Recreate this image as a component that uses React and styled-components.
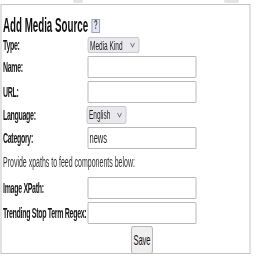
import React from "react";
import styled, { createGlobalStyle } from "styled-components";

const GlobalStyle = createGlobalStyle`
  html, body {
    margin: 0;
    padding: 0;
    background: #ffffff;
    overflow: hidden;
  }
  body {
    font-family: "Liberation Sans", Arial, sans-serif;
    color: #1a1a1a;
  }
`;

// the page is drawn at double width and squeezed, as in the screenshot
const Stage = styled.div`
  width: 512px;
  height: 256px;
  transform: scaleX(0.5);
  transform-origin: 0 0;
`;

const TopStrip = styled.div`
  height: 4px;
  display: flex;
  align-items: flex-start;
  padding-left: 146px;
  gap: 282px;
`;

const TabStub = styled.div`
  width: ${(p) => p.$w}px;
  height: 3px;
  background: #e4e4e4;
  border-radius: 0 0 4px 4px;
`;

const Panel = styled.div`
  box-sizing: border-box;
  margin-left: 1px;
  width: 500px;
  height: 250px;
  border: solid #c4c4c4;
  border-width: 1px 2px;
  padding: 0 0 0 3px;
  display: flex;
  flex-direction: column;
`;

const Title = styled.h2`
  margin: 11px 0 0 0;
  font-size: 19.5px;
  line-height: 19px;
  font-weight: bold;
  color: #111;
  display: flex;
  align-items: center;
`;

const HelpBox = styled.span`
  box-sizing: border-box;
  display: inline-flex;
  align-items: center;
  justify-content: center;
  width: 17px;
  height: 14px;
  margin-left: 7px;
  background: #e6e7ee;
  border: solid #97a3c4;
  border-width: 1px 2px;
  font-size: 12px;
  font-weight: bold;
  color: #3c4660;
`;

const Row = styled.div`
  display: flex;
  align-items: center;
  padding: 1.5px 0;
`;

const Label = styled.label`
  width: 169px;
  flex: none;
  font-size: 14px;
  letter-spacing: -0.6px;
  font-weight: bold;
  color: #1a1a1a;
  white-space: nowrap;
`;

const TextInput = styled.input`
  box-sizing: border-box;
  width: 218px;
  height: 22px;
  margin: 0;
  padding: 0 2px;
  border: solid #b9b9b9;
  border-width: 1px 2px;
  border-radius: 2px;
  background: #fff;
  font-family: "Liberation Sans", Arial, sans-serif;
  font-size: 15px;
  color: #222;
  outline: none;
`;

const chevron =
  "url(\"data:image/svg+xml;utf8,<svg xmlns='http://www.w3.org/2000/svg' width='10' height='6' viewBox='0 0 10 6'><path d='M1 1l4 4 4-4' fill='none' stroke='%23666' stroke-width='1.2'/></svg>\")";

const Select = styled.select`
  box-sizing: border-box;
  appearance: none;
  width: ${(p) => p.$w}px;
  height: ${(p) => p.$h}px;
  margin: 0 0 0 ${(p) => p.$ml || 0}px;
  padding: 0 0 0 3px;
  border: solid #c9c9cf;
  border-width: 1px 2px;
  border-radius: 4px;
  background: #e9e9ed ${chevron} no-repeat right 7px center;
  font-family: "Liberation Sans", Arial, sans-serif;
  font-size: 13px;
  color: #222;
  outline: none;
`;

const Note = styled.p`
  margin: 4px 0 5px 0;
  font-size: 14px;
  line-height: 16px;
  color: #333;
  white-space: nowrap;
`;

const ButtonCell = styled.div`
  width: 218px;
  margin-left: 169px;
  display: flex;
  justify-content: center;
  padding-top: 0.5px;
`;

const SaveButton = styled.button`
  box-sizing: border-box;
  height: 28px;
  padding: 0 3px;
  border: solid #b8b8b8;
  border-width: 1px 2px;
  border-radius: 4px;
  background: #efefef;
  font-family: "Liberation Sans", Arial, sans-serif;
  font-size: 15px;
  color: #111;
`;

export default function App() {
  return (
    <>
      <GlobalStyle />
      <Stage>
        <TopStrip>
          <TabStub $w={20} />
          <TabStub $w={30} />
        </TopStrip>
        <Panel>
          <Title>
            Add Media Source
            <HelpBox>?</HelpBox>
          </Title>
          <Row>
            <Label>Type:</Label>
            <Select $w={104} $h={16} defaultValue="kind">
              <option value="kind">Media Kind</option>
            </Select>
          </Row>
          <Row>
            <Label>Name:</Label>
            <TextInput type="text" />
          </Row>
          <Row>
            <Label>URL:</Label>
            <TextInput type="text" />
          </Row>
          <Row>
            <Label>Language:</Label>
            <Select $w={80} $h={18} $ml={-2} defaultValue="en">
              <option value="en">English</option>
            </Select>
          </Row>
          <Row>
            <Label>Category:</Label>
            <TextInput type="text" defaultValue="news" />
          </Row>
          <Note>Provide xpaths to feed components below:</Note>
          <Row>
            <Label>Image XPath:</Label>
            <TextInput type="text" />
          </Row>
          <Row>
            <Label>Trending Stop Term Regex:</Label>
            <TextInput type="text" />
          </Row>
          <ButtonCell>
            <SaveButton>Save</SaveButton>
          </ButtonCell>
        </Panel>
      </Stage>
    </>
  );
}
